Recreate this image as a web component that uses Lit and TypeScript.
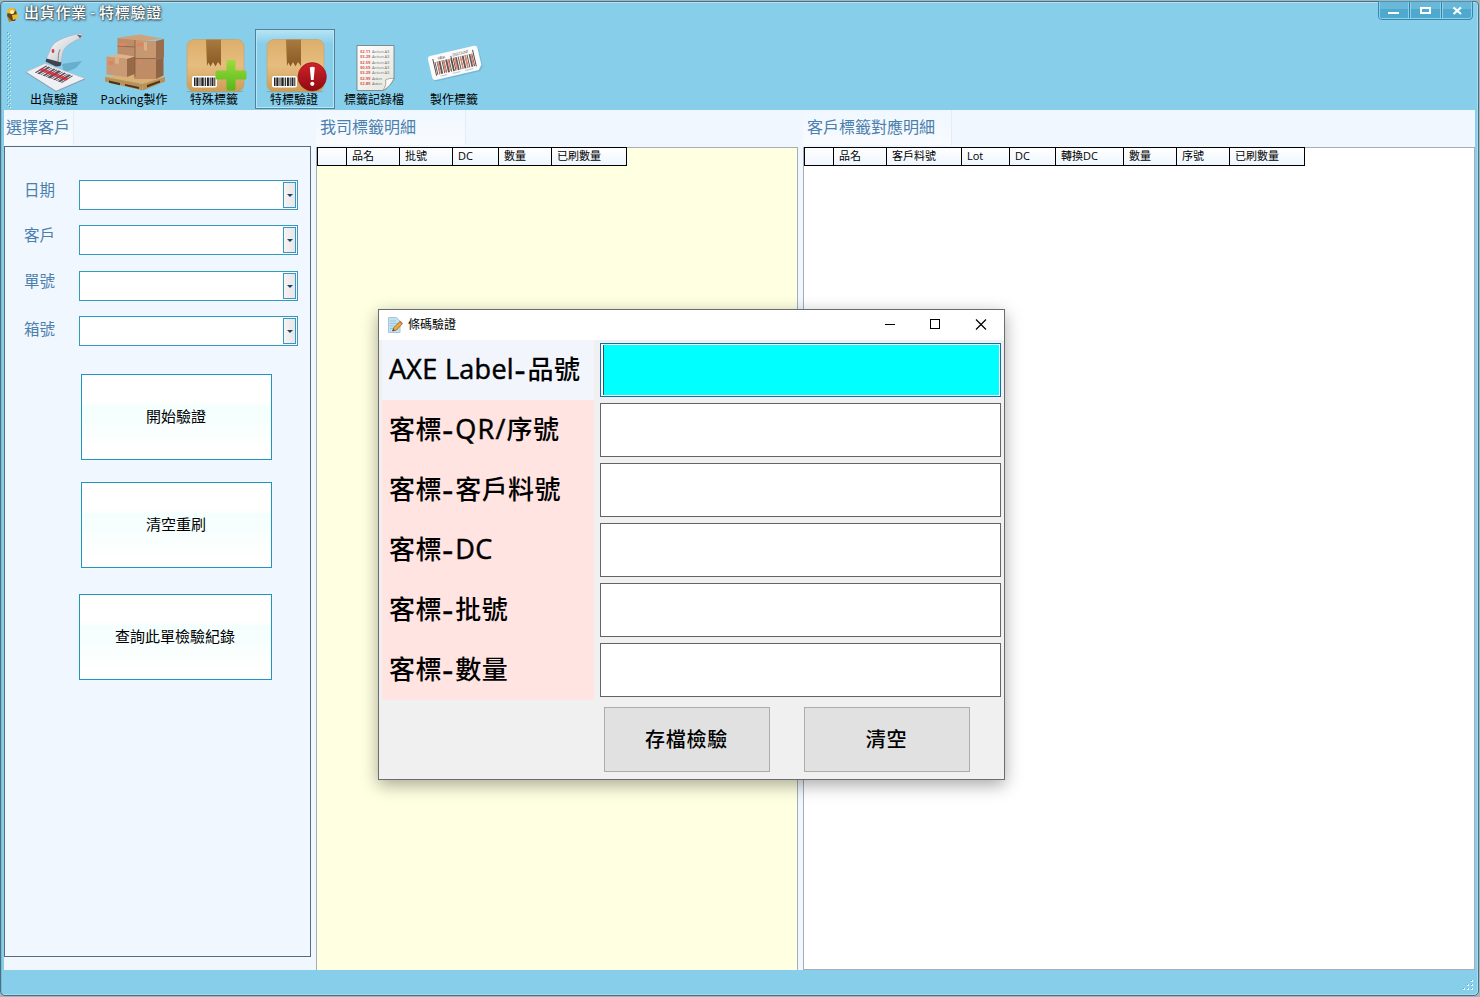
import { LitElement, html, css, svg } from "lit";
import { customElement } from "lit/decorators.js";
import { classMap } from "lit/directives/class-map.js";

const bars = (x: number, y: number, h: number, ws: number[], fill = "#222") => {
  let cx = x;
  return ws.map((w, i) => {
    const r = i % 2 === 0 ? svg`<rect x=${cx} y=${y} width=${w} height=${h} fill=${fill} />` : null;
    cx += w;
    return r;
  });
};

const parcel = (x: number) => svg`
  <ellipse cx=${x + 28} cy="91.500" rx="29" ry="1" fill="#5f93a5" opacity=".5" />
  <rect x=${x} y="39.5" width="57" height="52" rx="7" fill="url(#card)" stroke="#c99a55" stroke-width=".5" />
  <path d=${`M${x + 19} 39.5h15v26.500l-3-4-2.500 4.500-2.500-4.500-2.500 4.500-2-4-1.500 3.500z`} fill="url(#tape)" />
  <rect x=${x + 5} y="76" width="25" height="11.500" rx="2" fill="#fff" />
  ${bars(x + 7, 77.5, 8.5, [1.5, 0.8, 2.2, 1, 1, 0.8, 2.4, 1, 1.2, 1, 2, 0.8, 1, 0.8, 2, 0.8, 1])}`;

const defs = svg`<defs>
  <linearGradient id="card" x1="0" y1="0" x2="0" y2="1"><stop offset="0" stop-color="#dcae6a" /><stop offset=".5" stop-color="#e6bd80" /><stop offset="1" stop-color="#cd9c56" /></linearGradient>
  <linearGradient id="tape" x1="0" y1="0" x2="0" y2="1"><stop offset="0" stop-color="#a77a42" /><stop offset="1" stop-color="#8a5a22" /></linearGradient>
  <linearGradient id="green" x1="0" y1="0" x2="0" y2="1"><stop offset="0" stop-color="#9bdc3c" /><stop offset="1" stop-color="#55b81c" /></linearGradient>
  <linearGradient id="red" x1="0" y1="0" x2="0" y2="1"><stop offset="0" stop-color="#d0232b" /><stop offset="1" stop-color="#8f0a10" /></linearGradient>
  <linearGradient id="grip" x1="0" y1="0" x2="1" y2="1"><stop offset="0" stop-color="#fff" /><stop offset="1" stop-color="#b4b8c0" /></linearGradient>
  <linearGradient id="sheet" x1="0" y1="0" x2="1" y2="1"><stop offset="0" stop-color="#fff" /><stop offset="1" stop-color="#e4e4dc" /></linearGradient>
</defs>`;

const scanner = svg`
  <path d="M62 64 82 61 76 68 64 73z" fill="#4f93b5" opacity=".55" />
  <path d="M26 72 45 63.500 85 78.500 56 91z" fill="#eef0f4" stroke="#b5bcc8" stroke-width=".6" />
  <path d="M26 72.500 56 91.500 85 79" fill="none" stroke="#8a93a4" stroke-width=".8" />
  <g transform="matrix(.93 .36 -.8 .5 46 65.500)">
    ${bars(0, 0, 14, [1.5, 1, 2.5, 1, 1, 1.4, 2, 1, 1, 1, 3, 1, 1, 1.2, 2, 1, 1, 1, 2.5, 1, 1], "#5d5058")}
    <rect x="0" y="5" width="29" height="4" fill="#e02032" opacity=".75" />
  </g>
  <path d="M81 33.500c2.200.8 1.500 3.500-.5 4.800-7 3-13 6.500-16 10.500-2 3-2.500 8-3.500 14.500l-4 2-10-4.500-.5-2.500 5-11.500c4-7 18-11.500 29.500-13.300z" fill="url(#grip)" stroke="#a5acb8" stroke-width=".6" />
  <path d="M46.500 58.500 61.500 62.500 60.500 66 56 66.500 45.500 61.500z" fill="#3f434d" />
  <path d="M60 49.500c-2 3.500-1.500 8-2 12" stroke="#7e8694" fill="none" />
  <path d="M77 34.800 82 35.500 80 38.300z" fill="#596270" />
  <ellipse cx="53" cy="51" rx="1.400" ry="2" fill="#dc3a3f" />`;

const pallet = svg`
  <path d="M105 76.500 142 74 165 77.500 144 84 105 79z" fill="#d9b074" />
  <path d="M105 77 142.500 84v6.500L105 81.500zM142.500 84 165 77v4.500l-22 9z" fill="#b99058" />
  <path d="M109 80.500 120 83v2.300l-11-2.600zM125 84l14 3v2l-14-3.200zM147 85l13-4.500v2L147 87.500z" fill="#4c3417" />
  <path d="M118 37.500 140 34.500 164 39 135 41z" fill="#cfa27a" />
  <path d="M117.500 38 135 40v20h-17.500z" fill="#bd8c68" />
  <path d="M135 40 156 41v18h-21z" fill="#c7976f" />
  <path d="M156 41 164 39v18.500l-8 2z" fill="#9a6d4c" />
  <path d="M134 58h22v21h-22z" fill="#c08c65" />
  <path d="M156 59.500 163.500 57.500v18L156 79z" fill="#8f6343" />
  <path d="M106.500 56.500 119 54 135 56.500 127 59z" fill="#ddb48c" />
  <path d="M106.500 56.500 127 59v18l-20.500-2.500z" fill="#ca9a74" />
  <path d="M127 59 135 56.500v17.500L127 77z" fill="#986b48" />
  <path d="M135 40v37M117.500 46l17.500 1M135 58.500h21" stroke="#7c5a40" stroke-width=".7" fill="none" />
  <path d="M119 43h7v3h-7zM137 43h6v3.500h-6zM108.500 61h5v4h-5zM137 61.500l6 2-4 1.500z" fill="#dd8560" />
  <path d="M144 42v8l3 1v-9zM115 57.500l4 .5v6l-4-.5z" fill="#dbaf87" />`;

const logFile = svg`
  <path d="M357 45.500h37v33.500c-3 5-6 9.500-11 11.500h-26z" fill="url(#sheet)" stroke="#6c7378" stroke-width=".8" />
  ${["$2.11", "$3.29", "$2.59", "$0.59", "$3.29", "$2.99", "$2.89"].map((p, i) => svg`
    <text x="360" y=${53 + i * 5.3} font-size="4.200" font-weight="700" fill="#dd5a50" textLength="10.500">${p}</text>
    ${i < 5 ? svg`<text x="372" y=${53 + i * 5.3} font-size="4.200" fill="#777" textLength="17.500">Action A3</text>` : svg`<text x="372" y=${53 + i * 5.3} font-size="4.200" fill="#777" textLength="10">Action</text>`}`)}
  <path d="M394 78.500c-3-.5-6 .2-8.500 1.500 1 4-.5 8-3 10.500 5-2 9-7 11.500-12z" fill="#fbfbf6" stroke="#85898a" stroke-width=".7" />`;

const labelMaker = svg`<g transform="translate(.5 .5) rotate(-13 455 63) translate(455 63) scale(.96 1) translate(-455 -63)">
  <path d="M431 51h47q3 0 3 3v17l-4 4h-46q-3 0-3-3V54q0-3 3-3z" fill="#4f91b0" opacity=".35" transform="translate(1 1)" />
  <path d="M431 50h47q3 0 3 3v17l-4 4.500h-46q-3 0-3-3V53q0-3 3-3z" fill="#fbfbfb" />
  <text x="438" y="55.500" font-size="3.800" fill="#555" textLength="8">MEGA</text>
  <text x="454" y="55.500" font-size="3.800" fill="#555" textLength="17">DISCOUNT</text>
  ${bars(434, 57, 13, [1, 1.2, 1, 1, 2, 1.2, 1, 1, 1, 1, 2, 1.4, 1, 1, 1.6, 1, 1, 1.4, 2, 1, 1, 1.2, 1, 1, 2, 1.2, 1, 1, 1, 1.3, 1.8, 1, 1], "#655")}
  ${bars(436.500, 57, 12, [1.4, 4.500, 1.8, 3.500, 1.4, 5.500, 1.8, 4.500, 1.4, 3.500, 1.8, 4.500, 1.4], "#e08870")}
  <path d="M433 53.500v17M475.500 53.500v17M452 54.500v15.500" stroke="#544" />
  <path d="M437 72h7M450 72h8M463 72h9" stroke="#bbb" stroke-width=".8" />
</g>`;

const tools = [
  { label: "出貨驗證", icon: scanner },
  { label: "Packing製作", icon: pallet },
  {
    label: "特殊標籤",
    icon: svg`${parcel(187)}<path d="M228 60h6q1.500 0 1.500 1.500V70.500h9.500q1.500 0 1.500 1.500v6q0 1.500-1.500 1.500h-9.500V89q0 1.500-1.500 1.500h-6q-1.500 0-1.500-1.500v-9.500h-9.500q-1.500 0-1.500-1.500v-6q0-1.500 1.500-1.500h9.500V61.500q0-1.500 1.500-1.500z" fill="url(#green)" />`,
  },
  {
    label: "特標驗證",
    active: true,
    icon: svg`${parcel(267)}<circle cx="312.200" cy="76.800" r="14.200" fill="url(#red)" stroke="#8f1015" stroke-width=".6" /><path d="M309.800 67.500q2.500-1.500 5 0l-1.200 12.500h-2.600z" fill="#fff" /><circle cx="312.300" cy="83.800" r="2.100" fill="#fff" />`,
  },
  { label: "標籤記錄檔", icon: logFile },
  { label: "製作標籤", icon: labelMaker },
];

// Each form label is split into runs: CJK, dash and Latin take different spacing.
type Run = [kind: "cjk" | "dash" | "latin" | "loose", text: string];
const formLabels: Run[][] = [
  [["latin", "AXE Label"], ["dash", "-"], ["cjk", "品號"]],
  [["cjk", "客標"], ["dash", "-"], ["loose", "QR/"], ["cjk", "序號"]],
  [["cjk", "客標"], ["dash", "-"], ["cjk", "客戶料號"]],
  [["cjk", "客標"], ["dash", "-"], ["latin", "DC"]],
  [["cjk", "客標"], ["dash", "-"], ["cjk", "批號"]],
  [["cjk", "客標"], ["dash", "-"], ["cjk", "數量"]],
];

@customElement("app-root")
export class AppRoot extends LitElement {
  static styles = css`
    :host { display: block; width: 1480px; height: 997px; overflow: hidden; font-family: "Open Sans", "Noto Sans CJK TC", sans-serif; color: #000; background: #a3b6bf; }
    * { box-sizing: border-box; }
    .desk { height: 997px; padding: 1px 1px 1px 0; }
    .window { position: relative; height: 995px; display: grid; grid-template-rows: 28px 80px 860px 1fr; background: #87ceeb; border: 1px solid #4a7080; box-shadow: inset 0 1px #b5e3f4, inset -1px -1px #a9dcf0, inset 1px 0 #77bcd6; border-radius: 4px 4px 5px 5px; }
    .titlebar { display: flex; align-items: flex-start; padding: 2px 5px 0 4px; }
    .title { flex: 1; margin: -2px 0 0 4px; font-size: 15px; line-height: 20px; letter-spacing: .7px; color: #fff; font-weight: 500; white-space: pre; text-shadow: 0 0 2px #33454e, 1px 1px 2px #44565f, 0 0 3px #5e7884; word-spacing: -1.2px; }
    .appicon { width: 15px; height: 18px; margin-top: 2px; }
    .winbtns { display: flex; margin-top: -3px; }
    .winbtns svg { display: block; }
    .toolbar { display: flex; padding: 0 0 0 6px; }
    .grip { width: 5px; height: 76px; margin: 2px 3px 0 0; flex: none; }
    .tool { width: 80px; height: 80px; margin-top: -1px; display: flex; flex-direction: column; align-items: center; border: 1px solid transparent; flex: none; }
    .tool.active { border-color: #56809a; box-shadow: inset 0 0 0 1px #b9e4f5; background: linear-gradient(#b8e3f5, #87ceeb 18%); }
    .tool svg { width: 80px; height: 64px; margin: -1px -1px 0; flex: none; display: block; }
    .toollabel { font-size: 12px; line-height: 14px; margin-left: -2px; white-space: nowrap; }
    .body { margin: 0 3px; background: #f0f7ff; display: grid; grid-template-columns: 307px 482px 672px; column-gap: 5px; }
    .col { display: flex; flex-direction: column; }
    .head { height: 37px; display: flex; }
    .headtext { font-size: 16px; line-height: 34px; height: 35px; color: #4b80ad; background: linear-gradient(#f0f7ff, #f8fbff); border-right: 1px solid #e3edf8; white-space: nowrap; padding-left: 2px; }
    .head1 { width: 70px; } .head2 { width: 150px; padding-left: 4px; } .head3 { width: 149px; padding-left: 4px; }
    .group { border: 1px solid #566a80; width: 307px; height: 811px; margin-top: -1px; padding: 33px 0 0 19px; }
    .field { display: flex; height: 30px; margin-bottom: 15.400px; }
    .fieldlabel { width: 55px; font-size: 15.500px; line-height: 20px; color: #4b80ad; }
    .low { padding-top: 3px; }
    .combo { width: 219px; height: 30px; border: 1px solid #3399c0; background: #fff; display: flex; justify-content: flex-end; padding: 1px; }
    .drop { width: 13px; height: 26px; border: 1px solid #3399c0; background: linear-gradient(90deg, #f8f4f2, #e9e4e6); display: flex; align-items: center; justify-content: center; }
    .drop i { width: 0; height: 0; border: 3px solid transparent; border-top-color: #1b4560; border-bottom: 0; margin-top: 1px; }
    .actions { display: flex; flex-direction: column; padding: 12.400px 0 0 57px; }
    .action { width: 191px; height: 86px; border: 1px solid #1f96bb; background: linear-gradient(#fff 32%, #f3fffe 38%, #fafffe 70%, #fff 90%); font: inherit; font-size: 15px; padding: 0 1px 2px 0; margin: 0 0 22px; text-align: center; color: #000; }
    .action.wide { width: 193px; margin: 4px 0 0 -2px; }
    .grid { height: 823px; border: 1px solid #a5adb5; background: #fff; }
    .grid.cream { background: #ffffe1; border-bottom: 0; }
    .row { display: flex; width: max-content; border: 1px solid #000; margin-top: -1px; height: 19px; background: linear-gradient(#fff, #eef6fe); }
    .cell { border-left: 1px solid #000; font-size: 11px; line-height: 15px; padding-left: 5px; white-space: nowrap; }
    .cell:first-child { border-left: 0; }
    .status { display: flex; justify-content: flex-end; align-items: flex-end; padding: 0 4px 4px; }
    .dialog { position: absolute; left: 377px; top: 307px; width: 627px; height: 471px; border: 1px solid #6a6d6d; background: #f0f0f0; box-shadow: 0 5px 16px rgba(0,0,0,.34); display: flex; flex-direction: column; }
    .dtitle { height: 30px; background: #fff; display: flex; align-items: center; padding-left: 9px; font-size: 12px; }
    .dname { flex: 1; margin-left: 5px; line-height: 30px; }
    .form { display: grid; grid-template-columns: 212px 401px; grid-auto-rows: 60px; column-gap: 6px; padding-left: 3px; }
    .dlabel { background: #ffe4e1; font-size: 26px; font-weight: 500; line-height: 58px; height: 60px; padding-left: 7px; white-space: nowrap; display: flex; }
    .cjk { letter-spacing: .4px; }
    .latin, .loose { font-size: 27px; letter-spacing: .3px; -webkit-text-stroke: .5px #000; white-space: pre; }
    .loose { letter-spacing: 1.200px; }
    .dash { width: 13.500px; padding-left: .5px; -webkit-text-stroke: .5px #000; font-size: 34px; }
    .dlabel.first { background: #f2f6fc; }
    .dinput { height: 54px; margin-top: 3px; border: 1px solid #646464; background: #fff; }
    .dinput.focus { border-color: #0f6fae; padding: 1px 1px 1px 2px; }
    .fill { height: 50px; background: #0ff; border-left: 1px solid #355; }
    .dbuttons { display: flex; gap: 34px; padding: 7px 0 0 225px; }
    .dbutton { width: 166px; height: 65px; border: 1px solid #adadad; background: #e1e1e1; font: inherit; font-size: 20px; font-weight: 500; letter-spacing: .7px; padding: 0 1px 2px 0; color: #000; }
  `;

  private header(cols: [string, number][]) {
    return html`<div class="row">${cols.map(([t, w]) => html`<div class="cell" style="width:${w}px">${t}</div>`)}</div>`;
  }

  render() {
    return html`<div class="desk"><div class="window">
      <div class="titlebar">
        <svg class="appicon" viewBox="0 0 15 18">
          <path d="M3 4q4-4 8 0l1 5-2 6H6L2 10z" fill="#5a4a22" />
          <path d="M2 4q5-5 9 0l-3 4-6-1zM7 9l6-1v4l-5 2z" fill="#f0b72f" />
          <circle cx="7" cy="6" r="1.900" fill="#fff5c8" /><path d="M2 10 7 15 4 16z" fill="#c27d1c" />
        </svg>
        <div class="title">出貨作業 - 特標驗證</div>
        <div class="winbtns">
          <svg width="95" height="20" viewBox="0 0 95 20">
            <path d="M.5 0v15q0 3.500 3.500 3.500h87q3.500 0 3.500-3.500V0z" fill="#4fa9ce" stroke="#3689ac" />
            <path d="M1.500 1h92v7h-92z" fill="#69b8d8" />
            <path d="M31.500 1v17.500M63.500 1v17.500" stroke="#2f83a6" /><path d="M30.500 1v17M32.500 1v17M62.500 1v17M64.500 1v17M1.500 1v15q0 1.500 2 1.500h87q3 0 3-2.500V1" stroke="#8fd0e8" fill="none" />
            <path d="M10 12h11" stroke="#fff" stroke-width="2" /><rect x="43" y="7" width="9" height="5" fill="none" stroke="#fff" stroke-width="2" />
            <path d="M75.500 6.500 83 13M83 6.500 75.500 13" stroke="#fff" stroke-width="2.300" />
          </svg>
        </div>
      </div>
      <div class="toolbar">
        <svg class="grip" viewBox="0 0 5 76">${Array.from({ length: 19 }, (_, i) => svg`
          <rect x="0" y=${i * 4} width="1" height="1" fill="#5d9ab4" /><rect x="1" y=${i * 4 + 1} width="1" height="1" fill="#d8f1fa" />
          <rect x="2" y=${i * 4 + 2} width="1" height="1" fill="#5d9ab4" /><rect x="3" y=${i * 4 + 3} width="1" height="1" fill="#d8f1fa" />`)}</svg>
        ${tools.map((t, i) => html`<div class=${classMap({ tool: true, active: !!t.active })}>
          <svg viewBox="${15 + 80 * i} 29 80 64">${defs}${t.icon}</svg>
          <div class="toollabel">${t.label}</div>
        </div>`)}
      </div>
      <div class="body">
        <div class="col">
          <div class="head"><div class="headtext head1">選擇客戶</div></div>
          <div class="group">
            ${["日期", "客戶", "單號", "箱號"].map((l, i) => html`<div class="field">
              <div class=${classMap({ fieldlabel: true, low: i === 3 })}>${l}</div>
              <div class="combo"><div class="drop"><i></i></div></div>
            </div>`)}
            <div class="actions">
              <button class="action">開始驗證</button>
              <button class="action">清空重刷</button>
              <button class="action wide">查詢此單檢驗紀錄</button>
            </div>
          </div>
        </div>
        <div class="col">
          <div class="head"><div class="headtext head2">我司標籤明細</div></div>
          <div class="grid cream">${this.header([["", 28], ["品名", 53], ["批號", 53], ["DC", 46], ["數量", 53], ["已刷數量", 75]])}</div>
        </div>
        <div class="col">
          <div class="head"><div class="headtext head3">客戶標籤對應明細</div></div>
          <div class="grid">${this.header([["", 28], ["品名", 53], ["客戶料號", 75], ["Lot", 48], ["DC", 46], ["轉換DC", 68], ["數量", 53], ["序號", 53], ["已刷數量", 75]])}</div>
        </div>
      </div>
      <div class="status">
        <svg width="12" height="12" viewBox="0 0 12 12"><path d="M9 1h2v2H9zM5 5h2v2H5zM9 5h2v2H9zM1 9h2v2H1zM5 9h2v2H5zM9 9h2v2H9z" fill="#e8f8ff" /><path d="M9 1h1v1H9zM5 5h1v1H5zM9 5h1v1H9zM1 9h1v1H1zM5 9h1v1H5zM9 9h1v1H9z" fill="#6a9db5" /></svg>
      </div>
      <div class="dialog">
        <div class="dtitle">
          <svg width="15" height="16" viewBox="0 0 15 16">
            <path d="M.5.5h8L12 4v11.500H.5z" fill="#c3e1f5" stroke="#a5c6dc" /><path d="M2 4h6M2 6.500h8M2 9h5M2 11.500h4" stroke="#9dc3dd" />
            <path d="M4.500 14 6 10.500 12 4.500 14.300 6.800 8.500 13z" fill="#f0a92d" stroke="#805619" stroke-width=".7" /><path d="M4.500 14 5.200 12 6.600 13.300z" fill="#333" /><path d="M12 4.500 14.300 6.800" stroke="#d06a50" stroke-width="1.500" />
          </svg>
          <div class="dname">條碼驗證</div>
          <svg width="120" height="30" viewBox="0 0 120 30" fill="none" stroke="#000"><path d="M1 14.500h10" /><path d="M92 9.500l10 10M102 9.500l-10 10" stroke-width="1.200" /><rect x="46.500" y="9.500" width="9" height="9" /></svg>
        </div>
        <div class="form">
          ${formLabels.map((runs, i) => html`
            <div class=${classMap({ dlabel: true, first: i === 0 })}>${runs.map(([k, t]) => html`<span class=${k}>${t}</span>`)}</div>
            <div class=${classMap({ dinput: true, focus: i === 0 })}>${i === 0 ? html`<div class="fill"></div>` : null}</div>`)}
        </div>
        <div class="dbuttons"><button class="dbutton">存檔檢驗</button><button class="dbutton">清空</button></div>
      </div>
    </div></div>`;
  }
}
